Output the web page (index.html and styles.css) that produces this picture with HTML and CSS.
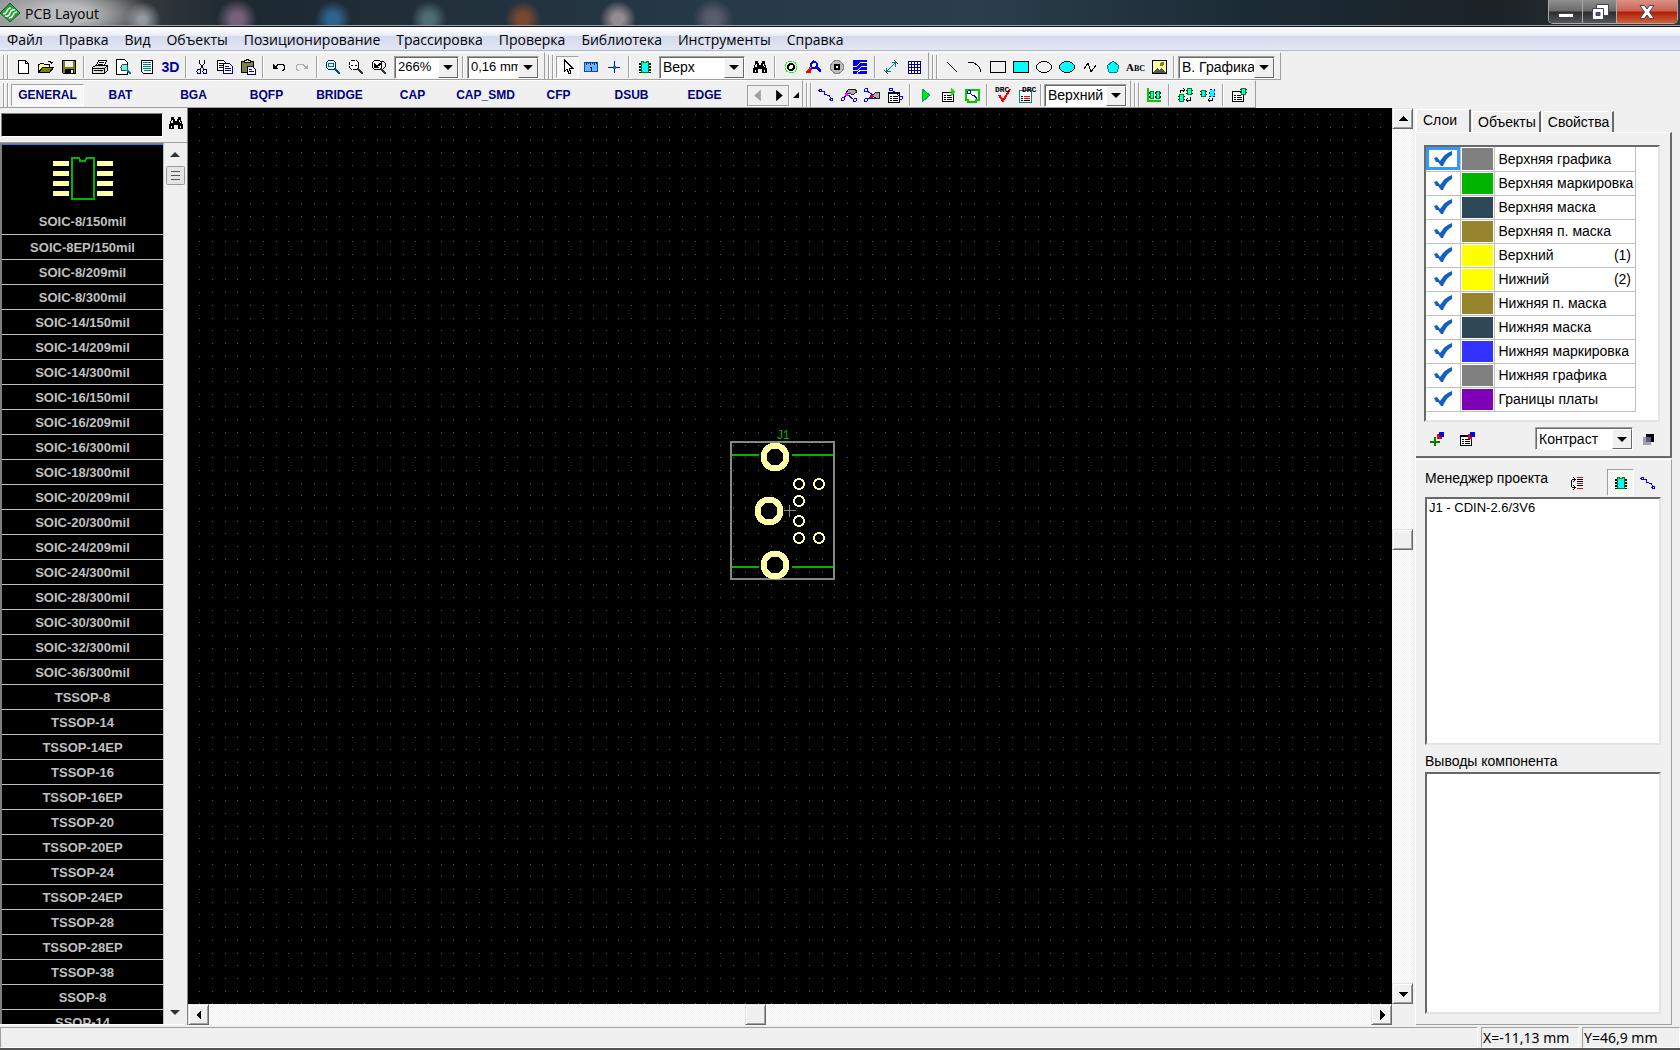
FILE: index.html
```
<!DOCTYPE html>
<html lang="ru">
<head>
<meta charset="utf-8">
<title>PCB Layout</title>
<link rel="stylesheet" href="styles.css">
</head>
<body>
<svg class="sprite" aria-hidden="true">
  <defs>
    <symbol id="i-new" viewBox="0 0 16 16"><path d="M3.500 1.500h7l3 3v10h-10z" fill="#fff" stroke="#000"/><path d="M10.500 1.500v3h3" fill="none" stroke="#000"/></symbol>
    <symbol id="i-open" viewBox="0 0 16 16"><path d="M.5 13.500v-8h1l1-1h3l1 1h5v3" fill="#ffff80" stroke="#000"/><path d="M.5 13.500l4-5h11l-4 5z" fill="#808000" stroke="#000"/><path d="M9.500 3.500q2-3 4 0v1m-2-1h3" fill="none" stroke="#000"/></symbol>
    <symbol id="i-save" viewBox="0 0 16 16"><path d="M1.500 1.500h13v13h-12l-1-1z" fill="#808000" stroke="#000"/><path d="M4 2h8v6H4z" fill="#f0f0f0"/><path d="M4 10h9v5H4z" fill="#000"/><path d="M10 11h2v3h-2z" fill="#f0f0f0"/></symbol>
    <symbol id="i-print" viewBox="0 0 16 16"><path d="M4.500 6.500l2-5h8l-2 5" fill="#fff" stroke="#000"/><path d="M7 3.500h5M6 5.500h5" stroke="#000"/><path d="M.5 8.500l3-2h12v5l-3 3h-12z" fill="#ddd" stroke="#000"/><path d="M.5 9.500h12v5m0-5l3-3M2 11.500h9" fill="none" stroke="#000"/><path d="M8 12h2v1H8z" fill="#cc0"/></symbol>
    <symbol id="i-preview" viewBox="0 0 16 16"><path d="M1.500.5h8l3 3v12h-11z" fill="#fff" stroke="#000"/><circle cx="9.500" cy="8.500" r="3.500" fill="#6cf2f2" stroke="#444"/><path d="M12 11l4 4" stroke="#008080" stroke-width="2"/></symbol>
    <symbol id="i-text" viewBox="0 0 16 16"><path d="M2.500 1.500h11v13h-9l-2-2z" fill="#fff" stroke="#000"/><path d="M4 3.500h8M4 5.500h8M4 7.500h8M4 9.500h8M5 11.500h7" stroke="#008080"/></symbol>
    <symbol id="i-cut" viewBox="0 0 16 16"><path d="M5.500 1v3l4 6M10.500 1v3l-4 6" fill="none" stroke="#000"/><circle cx="5" cy="12.500" r="2" fill="none" stroke="#000080"/><circle cx="11" cy="12.500" r="2" fill="none" stroke="#000080"/></symbol>
    <symbol id="i-copy" viewBox="0 0 16 16"><path d="M.5 1.500h6l3 3v7h-9z" fill="#fff" stroke="#000"/><path d="M2 4.500h4M2 6.500h5M2 8.500h5" stroke="#000"/><path d="M6.500 4.500h6l3 3v7h-9z" fill="#fff" stroke="#000080"/><path d="M8 7.500h4M8 9.500h6M8 11.500h6" stroke="#000080"/></symbol>
    <symbol id="i-paste" viewBox="0 0 16 16"><path d="M1.500 2.500h12v11h-12z" fill="#808040" stroke="#000"/><path d="M4.500 3.500v-2h2v-1h2v1h2v2z" fill="#ffff60" stroke="#000"/><path d="M7.500 7.500h5l3 3v5h-8z" fill="#fff" stroke="#000080"/><path d="M9 10.500h3M9 12.500h5" stroke="#000080"/></symbol>
    <symbol id="i-undo" viewBox="0 0 16 16"><path d="M2 5v5h5z"/><path d="M4.500 8l3-3h4l2 2v3l-2 2" fill="none" stroke="#000"/></symbol>
    <symbol id="i-redo" viewBox="0 0 16 16"><path d="M14 5v5H9z" fill="#b0b0b0"/><path d="M11.500 8l-3-3h-4l-2 2v3l2 2" fill="none" stroke="#b0b0b0"/></symbol>
    <symbol id="i-zoom" viewBox="0 0 16 16"><circle cx="6" cy="6" r="5" fill="#e8f4f8" stroke="#003050"/><path d="M3.500 4.500h5v3h-5z" fill="none" stroke="#0070a0"/><path d="M9.500 9.500l5.500 5.500" stroke="#005070" stroke-width="2"/></symbol>
    <symbol id="i-zoomall" viewBox="0 0 16 16"><circle cx="6" cy="6" r="5" fill="#fff" stroke="#000" stroke-dasharray="4 1"/><path d="M3 6.500h2m2 0h2" stroke="#000"/><path d="M9.500 9.500l5.500 5.500" stroke="#333" stroke-width="2"/></symbol>
    <symbol id="i-zoomprev" viewBox="0 0 16 16"><circle cx="6" cy="6" r="5" fill="#fff" stroke="#000"/><path d="M10 2q5 0 5 5l-3 3" fill="none" stroke="#000"/><path d="M3 4v5h5zM6 7l3-4 2 3z"/><path d="M9.500 9.500l5.500 5.500" stroke="#333" stroke-width="2"/></symbol>
    <symbol id="i-pointer" viewBox="0 0 16 16"><path d="M4.500 1v11l2.500-2 2 5 2-1-2-5h3.500z" fill="#fff" stroke="#000"/></symbol>
    <symbol id="i-ruler" viewBox="0 0 16 16"><path d="M1.500 3.500h13v9h-13z" fill="#6cb4ff" stroke="#0050b0"/><path d="M3.500 3v3M5.500 3v2M7.500 3v3M9.500 3v2M11.500 3v3M13.500 3v2" stroke="#003080"/><path d="M7 8h1.500v4" fill="none" stroke="#000"/></symbol>
    <symbol id="i-origin" viewBox="0 0 16 16"><path d="M2 8.500h12M8.500 2v12" stroke="#00f"/><path d="M7 7h3v3H7z" fill="#008080"/></symbol>
    <symbol id="i-chip" viewBox="0 0 16 16"><path d="M2 4h12v2H2zM2 7h12v2H2zM2 10h12v2H2zM2 13h12v1H2z"/><path d="M4.500 2.500h2v1h3v-1h2v11h-7z" fill="#0ff" stroke="#008000"/></symbol>
    <symbol id="i-find" viewBox="0 0 16 16"><path d="M3 2h3v2h1v2h2V4h1V2h3v3l2 5v4h-5v-4H6v4H1v-4l2-5z"/><path class="glint" d="M4 5h1v3H3zM11 5h1l1 3h-1zM3 11h1v2H3zM12 11h1v2h-1z"/></symbol>
    <symbol id="i-padgreen" viewBox="0 0 16 16"><circle cx="8" cy="8" r="6" fill="none" stroke="#0f0" stroke-dasharray="5 1"/><circle cx="8" cy="8" r="3" fill="#fff" stroke="#000" stroke-width="2"/></symbol>
    <symbol id="i-route" viewBox="0 0 16 16"><path d="M1 14l4-5M2 13l3-1" stroke="#f00" stroke-width="3"/><path d="M6 10l2-6 3 5 4 3" fill="none" stroke="#00f" stroke-width="3"/><circle cx="8" cy="6" r="3" fill="#fff" stroke="#00f" stroke-width="2"/></symbol>
    <symbol id="i-padgray" viewBox="0 0 16 16"><circle cx="8" cy="8" r="6.500" fill="#bbb" stroke="#888"/><circle cx="8" cy="8" r="2.500" fill="#fff" stroke="#000" stroke-width="2"/></symbol>
    <symbol id="i-pour" viewBox="0 0 16 16"><path d="M1 1h14v14H1z" fill="#00f"/><path d="M1 7h4l4-4h6M1 11h5l4-4h5M5 15v-1l4-3h6" fill="none" stroke="#fff"/></symbol>
    <symbol id="i-dim" viewBox="0 0 16 16"><path d="M3 13L13 3" stroke="#008080"/><path d="M8.500 3.500h4v4M3.500 8.500v4h4" fill="none" stroke="#008080"/><path d="M11 1l4 4M1 11l4 4" stroke="#444"/></symbol>
    <symbol id="i-grid" viewBox="0 0 16 16"><path d="M2.500 2.500h12v12h-12zM2 5.500h12M2 8.500h12M2 11.500h12M5.500 2v12M8.500 2v12M11.500 2v12" fill="#fff" stroke="#000080"/></symbol>
    <symbol id="i-line" viewBox="0 0 16 16"><path d="M3 3l10 10" stroke="#000"/></symbol>
    <symbol id="i-arc" viewBox="0 0 16 16"><path d="M1 3.500q10-1 13 9" fill="none" stroke="#000"/></symbol>
    <symbol id="i-rect" viewBox="0 0 16 16"><path d="M.5 2.500h15v11H.5z" fill="none" stroke="#000"/></symbol>
    <symbol id="i-frect" viewBox="0 0 16 16"><path d="M.5 2.500h15v11H.5z" fill="#0ff" stroke="#000"/></symbol>
    <symbol id="i-ell" viewBox="0 0 16 16"><ellipse cx="8" cy="8" rx="7.500" ry="5.500" fill="none" stroke="#000"/></symbol>
    <symbol id="i-fell" viewBox="0 0 16 16"><ellipse cx="8" cy="8" rx="7.500" ry="5.500" fill="#0ff" stroke="#000"/></symbol>
    <symbol id="i-poly" viewBox="0 0 16 16"><path d="M2 10l4-6 3 9 5-7" fill="none" stroke="#000"/></symbol>
    <symbol id="i-pent" viewBox="0 0 16 16"><path d="M8 2l6 5-2 6H4L2 7z" fill="#0ff" stroke="#008080"/></symbol>
    <symbol id="i-image" viewBox="0 0 16 16"><path d="M1.500 1.500h14v13h-14z" fill="#ffffa0" stroke="#000"/><path d="M2 14l4-5 2 2 2-2 5 5z" fill="#555"/><circle cx="11" cy="5" r="2" fill="#880"/></symbol>
    <symbol id="i-net" viewBox="0 0 16 16"><path d="M4 4.500h2l1 3 4 1 2 3" fill="none" stroke="#00f"/><circle cx="2.500" cy="3.500" r="1.500" fill="#fff" stroke="#00f"/><circle cx="13.500" cy="12.500" r="1.500" fill="#fff" stroke="#00f"/></symbol>
    <symbol id="i-netedit" viewBox="0 0 16 16"><path d="M5 6l3-4h6l2 3-5 3-2-2z" fill="#aaa" stroke="#222"/><path d="M2 12l4-5 7 6" fill="none" stroke="#00f"/><circle cx="2" cy="12" r="1.500" fill="#fff" stroke="#00f"/><circle cx="14" cy="13" r="1.500" fill="#fff" stroke="#00f"/><path d="M4 6h3v3H4z" fill="#f0f"/></symbol>
    <symbol id="i-netcut" viewBox="0 0 16 16"><path d="M8 9l4-4h3v6h-3z" fill="#aaa" stroke="#222"/><path d="M3 4l6 4-6 5M6 11l6 1" fill="none" stroke="#00f"/><path d="M6 8h3v3H6z" fill="#d00"/><circle cx="2" cy="3" r="1.500" fill="#fff" stroke="#00f"/><circle cx="2" cy="13" r="1.500" fill="#fff" stroke="#00f"/></symbol>
    <symbol id="i-netlist" viewBox="0 0 16 16"><path d="M1.500 5.500h11v10h-11z" fill="#fff" stroke="#000"/><path d="M1 6.500h12M3 9.500h2M6 9.500h5M3 11.500h2M6 11.500h5M3 13.500h2M6 13.500h5" stroke="#000"/><path d="M4 3l4 2 6 6" fill="none" stroke="#00f"/><circle cx="4" cy="2.500" r="1.500" fill="#fff" stroke="#00f"/><circle cx="14" cy="11" r="1.500" fill="#fff" stroke="#00f"/></symbol>
    <symbol id="i-run" viewBox="0 0 16 16"><path d="M4 2l8 6-8 7z" fill="#0e0" stroke="#0a6"/></symbol>
    <symbol id="i-runlist" viewBox="0 0 16 16"><path d="M1.500 5.500h11v9h-11z" fill="#fff" stroke="#000"/><path d="M3 8.500h2M6 8.500h5M3 10.500h2M6 10.500h5M3 12.500h2M6 12.500h5" stroke="#000"/><path d="M10 1l5 4-5 4z" fill="#0e0"/></symbol>
    <symbol id="i-board" viewBox="0 0 16 16"><path d="M2 3h13v10h-3v2H4v-2H2z" fill="#fff" stroke="#0c0" stroke-width="2"/><path d="M5 5l3 3h2l3 4" fill="none" stroke="#00f"/><circle cx="5" cy="5" r="1.500" fill="#fff" stroke="#00f"/></symbol>
    <symbol id="i-check" viewBox="0 0 16 16"><path d="M4 8l4 6 7-12" fill="none" stroke="#f00" stroke-width="2"/></symbol>
    <symbol id="i-drclist" viewBox="0 0 16 16"><path d="M1.500 3.500h12v12h-12z" fill="#fff" stroke="#088"/><path d="M3 9.500h2M3 11.500h2M3 13.500h2M6 13.500h6" stroke="#000"/><path d="M6 9.500h6M6 11.500h6" stroke="#f00"/></symbol>
    <symbol id="i-align" viewBox="0 0 16 16"><path d="M1.500 1v13h13" fill="none" stroke="#0c0" stroke-width="2"/><path d="M3 5h5v2H3zM3 9h5v2H3zM9 5h6v2H9zM9 9h6v2H9z" fill="#000"/><path d="M4.500 4.500h3v7h-3zM10.500 4.500h3v7h-3z" fill="#0ff" stroke="#080"/></symbol>
    <symbol id="i-place" viewBox="0 0 16 16"><path d="M1 9h7v1H1zM1 12h7v1H1zM9 3h7v1H9zM9 6h7v1H9z"/><path d="M2.500 7.500h4v7h-4zM10.500 1.500h4v6h-4z" fill="#0ff" stroke="#080"/><path d="M3 6V3h5M6 1l2 2-2 2M13 10v3H9M11 11l-2 2 2 2" fill="none" stroke="#000"/></symbol>
    <symbol id="i-place2" viewBox="0 0 16 16"><path d="M0 4h7v1H0zM0 7h7v1H0z"/><path d="M1.500 3.500h4v6h-4z" fill="#0ff" stroke="#080"/><path d="M9.500 2.500h5v7h-5z" fill="#0ff" stroke="#00f" stroke-dasharray="2 2"/><path d="M12 11v2H8M10 11l-2 2 2 2" fill="none" stroke="#000"/></symbol>
    <symbol id="i-complist" viewBox="0 0 16 16"><path d="M1.500 4.500h11v10h-11z" fill="#fff" stroke="#000"/><path d="M3 8.500h2M6 8.500h4M3 10.500h2M6 10.500h5M3 12.500h2M6 12.500h5" stroke="#000"/><path d="M9 2h7v1H9zM9 5h7v1H9z"/><path d="M10.500 1.500h4v6h-4z" fill="#0ff" stroke="#080"/></symbol>
    <symbol id="i-addlayer" viewBox="0 0 16 16"><path d="M6 6v9M1 10.500h10" stroke="#008000" stroke-width="2"/><path d="M8 3h5v5H8z" fill="#f00"/><path d="M10 1h5v5h-5z" fill="#00f"/></symbol>
    <symbol id="i-layerlist" viewBox="0 0 16 16"><path d="M1.500 4.500h11v10h-11z" fill="#fff" stroke="#000"/><path d="M1 4h9v2H1z"/><path d="M3 8.500h2M6 8.500h5M3 10.500h2M6 10.500h5M3 12.500h2M6 12.500h5" stroke="#000"/><path d="M9 3h4v5H9z" fill="#f00"/><path d="M11 1h5v5h-5z" fill="#00f"/></symbol>
    <symbol id="i-contrast" viewBox="0 0 16 16"><path d="M6 3h8v8H6z"/><path d="M3 6h8v8H3z" fill="#a0a0b0"/><path d="M6 6h5v5H6z" fill="#5c5c80"/></symbol>
    <symbol id="i-sort" viewBox="0 0 16 16"><path d="M5.500 4.500h-2l-1 1v6l1 1h2M4 2l2 2.500L4 7M4 10l2 2.500L4 15" fill="none" stroke="#000"/><path d="M8 2.500h6M8 13.500h6M8 8.500h6" stroke="#f00"/><path d="M8 4.500h6M8 6.500h6M8 10.500h6" stroke="#000"/></symbol>
    <symbol id="i-tick" viewBox="0 0 18 16"><path d="M0 7l3-1 3 4q5-8 12-10v4q-6 3-9 11H7L4 11H2z" fill="#1560c4"/></symbol>
  </defs>
</svg>

<header class="titlebar">
  <svg class="logo" viewBox="0 0 20 20" aria-hidden="true"><path d="M10 0l10 10-10 9L0 10z" fill="#2f9a40" stroke="#1c5c28"/><path d="M3 11q3 0 4-3t4-3M5 13q4 1 5-3t5-3M9 15q3 0 4-3t4-3" fill="none" stroke="#e6f4e6" stroke-width="1.500"/></svg>
  <h1>PCB Layout</h1>
  <div class="winbtns">
    <button class="win min" aria-label="Свернуть"><svg viewBox="0 0 18 16"><path d="M1.500 9.500h15v4h-15z" fill="#fff" stroke="#444"/></svg></button>
    <button class="win max" aria-label="Восстановить"><svg viewBox="0 0 18 16"><path d="M5.500.5h12v11h-12z" fill="#fff" stroke="#445"/><path d="M1.500 4.500h11v11h-11z" fill="#fff" stroke="#445"/><path d="M5 8.500h4v3H5z" fill="#556" stroke="#445"/></svg></button>
    <button class="win close" aria-label="Закрыть"><svg viewBox="0 0 18 16"><path d="M2 1.500h4.500L9 5l2.500-3.500H16L11.500 8l4.500 6.500h-4.500L9 11l-2.500 3.500H2L6.500 8z" fill="#fff" stroke="#445"/></svg></button>
  </div>
</header>

<nav class="menu" aria-label="Меню">
  <button>Файл</button><button>Правка</button><button>Вид</button><button>Объекты</button><button>Позиционирование</button><button>Трассировка</button><button>Проверка</button><button>Библиотека</button><button>Инструменты</button><button>Справка</button>
</nav>

<div class="bands">
  <div class="band">
    <i class="grip"></i>
    <button class="tb" aria-label="Новый"><svg><use href="#i-new"/></svg></button><button class="tb" aria-label="Открыть"><svg><use href="#i-open"/></svg></button><button class="tb" aria-label="Сохранить"><svg><use href="#i-save"/></svg></button>
    <i class="sep"></i>
    <button class="tb" aria-label="Печать"><svg><use href="#i-print"/></svg></button><button class="tb" aria-label="Просмотр"><svg><use href="#i-preview"/></svg></button><button class="tb wide" aria-label="Титулы"><svg><use href="#i-text"/></svg></button><button class="tb t3d">3D</button>
    <i class="sep"></i>
    <button class="tb" aria-label="Вырезать"><svg><use href="#i-cut"/></svg></button><button class="tb" aria-label="Копировать"><svg><use href="#i-copy"/></svg></button><button class="tb" aria-label="Вставить"><svg><use href="#i-paste"/></svg></button>
    <i class="sep"></i>
    <button class="tb" aria-label="Отменить"><svg><use href="#i-undo"/></svg></button><button class="tb" aria-label="Вернуть"><svg><use href="#i-redo"/></svg></button>
    <i class="sep"></i>
    <button class="tb" aria-label="Окно"><svg><use href="#i-zoom"/></svg></button><button class="tb" aria-label="Все"><svg><use href="#i-zoomall"/></svg></button><button class="tb" aria-label="Назад"><svg><use href="#i-zoomprev"/></svg></button>
    <span class="combo c-zoom"><select aria-label="Масштаб"><option>266%</option></select><span class="arrow"></span></span>
    <i class="sep"></i>
    <span class="combo c-step"><select aria-label="Шаг сетки"><option>0,16 mm</option></select><span class="arrow"></span></span>
  </div>
  <div class="band tight">
    <i class="grip"></i>
    <button class="tb down" aria-label="Выбор"><svg><use href="#i-pointer"/></svg></button><button class="tb" aria-label="Измерить"><svg><use href="#i-ruler"/></svg></button><button class="tb" aria-label="Начало координат"><svg><use href="#i-origin"/></svg></button>
    <i class="sep"></i>
    <button class="tb" aria-label="Компонент"><svg><use href="#i-chip"/></svg></button>
    <span class="combo c-side"><select aria-label="Сторона"><option>Верх</option></select><span class="arrow"></span></span>
    <button class="tb cyan" aria-label="Найти"><svg><use href="#i-find"/></svg></button>
    <i class="sep"></i>
    <button class="tb" aria-label="Площадка"><svg><use href="#i-padgreen"/></svg></button><button class="tb" aria-label="Трасса"><svg><use href="#i-route"/></svg></button><button class="tb" aria-label="Отверстие"><svg><use href="#i-padgray"/></svg></button><button class="tb" aria-label="Заливка"><svg><use href="#i-pour"/></svg></button>
    <i class="sep"></i>
    <button class="tb" aria-label="Размер"><svg><use href="#i-dim"/></svg></button><button class="tb" aria-label="Таблица"><svg><use href="#i-grid"/></svg></button>
  </div>
  <div class="band">
    <i class="grip"></i>
    <button class="tb" aria-label="Линия"><svg><use href="#i-line"/></svg></button><button class="tb" aria-label="Дуга"><svg><use href="#i-arc"/></svg></button><button class="tb" aria-label="Прямоугольник"><svg><use href="#i-rect"/></svg></button><button class="tb" aria-label="Прямоугольник с заливкой"><svg><use href="#i-frect"/></svg></button><button class="tb" aria-label="Эллипс"><svg><use href="#i-ell"/></svg></button><button class="tb" aria-label="Эллипс с заливкой"><svg><use href="#i-fell"/></svg></button><button class="tb" aria-label="Ломаная"><svg><use href="#i-poly"/></svg></button><button class="tb" aria-label="Полигон"><svg><use href="#i-pent"/></svg></button><button class="tb abc">Abc</button><button class="tb" aria-label="Изображение"><svg><use href="#i-image"/></svg></button>
    <i class="sep"></i>
    <span class="combo c-layer"><select aria-label="Слой графики"><option>В. Графика</option></select><span class="arrow"></span></span>
  </div>
</div>

<div class="bands">
  <div class="band tight">
    <i class="grip"></i>
    <button class="cat down">GENERAL</button><button class="cat">BAT</button><button class="cat">BGA</button><button class="cat">BQFP</button><button class="cat">BRIDGE</button><button class="cat">CAP</button><button class="cat">CAP_SMD</button><button class="cat">CFP</button><button class="cat">DSUB</button><button class="cat">EDGE</button>
    <div class="pager"><button aria-label="Предыдущие"><svg viewBox="0 0 20 20"><path d="M13 4v12l-7-6z" fill="#a0a0a0"/></svg></button><button aria-label="Следующие"><svg viewBox="0 0 20 20"><path d="M8 4v12l7-6z"/></svg></button></div>
    <svg class="corner" viewBox="0 0 6 6"><path d="M6 0v6H0z"/></svg>
  </div>
  <div class="band tight">
    <i class="grip"></i>
    <button class="tb" aria-label="Связь"><svg><use href="#i-net"/></svg></button><button class="tb" aria-label="Изменить связь"><svg><use href="#i-netedit"/></svg></button><button class="tb" aria-label="Разорвать связь"><svg><use href="#i-netcut"/></svg></button><button class="tb" aria-label="Структура сетей"><svg><use href="#i-netlist"/></svg></button>
    <i class="sep"></i>
    <button class="tb" aria-label="Трассировать"><svg><use href="#i-run"/></svg></button><button class="tb" aria-label="Настройка трассировки"><svg><use href="#i-runlist"/></svg></button><button class="tb" aria-label="Плата"><svg><use href="#i-board"/></svg></button>
    <i class="sep"></i>
    <button class="tb drc"><svg><use href="#i-check"/></svg><span>DRC</span></button><button class="tb drc right"><svg><use href="#i-drclist"/></svg><span>DRC</span></button>
    <i class="sep"></i>
    <span class="combo c-cur cyr"><select aria-label="Текущий слой"><option>Верхний</option></select><span class="arrow"></span></span>
  </div>
  <div class="band">
    <i class="grip"></i>
    <button class="tb" aria-label="Выровнять"><svg><use href="#i-align"/></svg></button>
    <i class="sep"></i>
    <button class="tb" aria-label="Расставить"><svg><use href="#i-place"/></svg></button><button class="tb" aria-label="Авторасстановка"><svg><use href="#i-place2"/></svg></button>
    <i class="sep"></i>
    <button class="tb" aria-label="Настройка"><svg><use href="#i-complist"/></svg></button>
  </div>
</div>

<main>
  <aside class="library">
    <div class="search"><input type="text" aria-label="Поиск"><button class="tb" aria-label="Найти компонент"><svg><use href="#i-find"/></svg></button></div>
    <div class="listwrap">
      <ul class="parts">
        <li class="first"><svg width="62" height="44" viewBox="0 0 62 44"><path d="M0 4h17v5H0zM0 14h17v5H0zM0 25h17v5H0zM0 35h17v5H0zM45 4h17v5H45zM45 14h17v5H45zM45 25h17v5H45zM45 35h17v5H45z" fill="#ffffa8"/><path d="M20 1h7l1 3h5l2-3h7v42H20z" fill="none" stroke="#00b400" stroke-width="2"/></svg>SOIC-8/150mil</li>
        <li>SOIC-8EP/150mil</li><li>SOIC-8/209mil</li><li>SOIC-8/300mil</li><li>SOIC-14/150mil</li><li>SOIC-14/209mil</li><li>SOIC-14/300mil</li><li>SOIC-16/150mil</li><li>SOIC-16/209mil</li><li>SOIC-16/300mil</li><li>SOIC-18/300mil</li><li>SOIC-20/209mil</li><li>SOIC-20/300mil</li><li>SOIC-24/209mil</li><li>SOIC-24/300mil</li><li>SOIC-28/300mil</li><li>SOIC-30/300mil</li><li>SOIC-32/300mil</li><li>SOIC-36/300mil</li><li>TSSOP-8</li><li>TSSOP-14</li><li>TSSOP-14EP</li><li>TSSOP-16</li><li>TSSOP-16EP</li><li>TSSOP-20</li><li>TSSOP-20EP</li><li>TSSOP-24</li><li>TSSOP-24EP</li><li>TSSOP-28</li><li>TSSOP-28EP</li><li>TSSOP-38</li><li>SSOP-8</li><li>SSOP-14</li>
      </ul>
      <div class="softbar">
        <svg viewBox="0 0 10 5"><path d="M5 0l5 5H0z" fill="#333"/></svg>
        <svg class="softthumb" viewBox="0 0 19 19"><rect x=".5" y=".5" width="18" height="18" rx="1" fill="#e4e4e6" stroke="#999"/><path d="M5 5.500h9M5 9.500h9M5 13.500h9" stroke="#555"/></svg>
        <svg class="last" viewBox="0 0 10 5"><path d="M0 0h10L5 5z" fill="#333"/></svg>
      </div>
    </div>
  </aside>

  <section class="work">
    <svg class="canvas" shape-rendering="crispEdges">
      <defs>
        <pattern id="dots" x="11" y="6" width="127" height="127" patternUnits="userSpaceOnUse">
          <path id="dotrow" d="M0 .5h1M13 .5h1M26 .5h1M38 .5h1M51 .5h1M64 .5h1M77 .5h1M89 .5h1M102 .5h1M115 .5h1" stroke="#585858"/>
          <use href="#dotrow" y="13"/><use href="#dotrow" y="26"/><use href="#dotrow" y="38"/><use href="#dotrow" y="51"/><use href="#dotrow" y="64"/><use href="#dotrow" y="77"/><use href="#dotrow" y="89"/><use href="#dotrow" y="102"/><use href="#dotrow" y="115"/>
        </pattern>
      </defs>
      <rect width="100%" height="100%" fill="#000"/>
      <rect width="100%" height="100%" fill="url(#dots)"/>
      <rect x="543" y="334" width="103" height="137" fill="none" stroke="#888" stroke-width="2"/>
      <path d="M544 347h27M604 347h41M544 459h27M604 459h41" stroke="#00b400" stroke-width="2"/>
      <g fill="#000" stroke="#ffffa8">
        <g stroke-width="6"><circle cx="587" cy="349" r="11.500"/><circle cx="581" cy="403" r="11.500"/><circle cx="587" cy="457" r="11.500"/></g>
        <g stroke-width="2"><circle cx="611" cy="376" r="5"/><circle cx="631" cy="376" r="5"/><circle cx="611" cy="393" r="5"/><circle cx="611" cy="413" r="5"/><circle cx="611" cy="430" r="5"/><circle cx="631" cy="430" r="5"/></g>
      </g>
      <path d="M596 402.500h12M601.500 397v12" stroke="#888"/>
      <text x="589" y="331" class="ref">J1</text>
    </svg>
    <div class="vbar"><span class="sb"><svg viewBox="0 0 10 10"><path d="M5 2l5 5H0z"/></svg></span><i class="fill"></i><span class="sb"></span><i class="fill"></i><span class="sb"><svg viewBox="0 0 10 10"><path d="M0 3h10L5 8z"/></svg></span></div>
    <div class="hbar"><span class="sb"><svg viewBox="0 0 10 10"><path d="M7 0v10L2 5z"/></svg></span><i class="fill"></i><span class="sb"></span><i class="fill"></i><span class="sb"><svg viewBox="0 0 10 10"><path d="M3 0v10l5-5z"/></svg></span></div>
  </section>

  <aside class="side">
    <div class="tabs" role="tablist"><button class="tab on" role="tab">Слои</button><button class="tab" role="tab">Объекты</button><button class="tab" role="tab">Свойства</button></div>
    <div class="panel">
      <div class="sunken layers">
        <table>
          <tbody>
            <tr class="sel"><td><label class="tick"><input type="checkbox" checked aria-label="Верхняя графика"><svg><use href="#i-tick"/></svg></label></td><td class="sw gray"></td><td>Верхняя графика</td></tr>
            <tr><td><label class="tick"><input type="checkbox" checked aria-label="Верхняя маркировка"><svg><use href="#i-tick"/></svg></label></td><td class="sw green"></td><td>Верхняя маркировка</td></tr>
            <tr><td><label class="tick"><input type="checkbox" checked aria-label="Верхняя маска"><svg><use href="#i-tick"/></svg></label></td><td class="sw slate"></td><td>Верхняя маска</td></tr>
            <tr><td><label class="tick"><input type="checkbox" checked aria-label="Верхняя п. маска"><svg><use href="#i-tick"/></svg></label></td><td class="sw olive"></td><td>Верхняя п. маска</td></tr>
            <tr><td><label class="tick"><input type="checkbox" checked aria-label="Верхний"><svg><use href="#i-tick"/></svg></label></td><td class="sw yellow"></td><td>Верхний<span class="num">(1)</span></td></tr>
            <tr><td><label class="tick"><input type="checkbox" checked aria-label="Нижний"><svg><use href="#i-tick"/></svg></label></td><td class="sw yellow"></td><td>Нижний<span class="num">(2)</span></td></tr>
            <tr><td><label class="tick"><input type="checkbox" checked aria-label="Нижняя п. маска"><svg><use href="#i-tick"/></svg></label></td><td class="sw olive"></td><td>Нижняя п. маска</td></tr>
            <tr><td><label class="tick"><input type="checkbox" checked aria-label="Нижняя маска"><svg><use href="#i-tick"/></svg></label></td><td class="sw slate"></td><td>Нижняя маска</td></tr>
            <tr><td><label class="tick"><input type="checkbox" checked aria-label="Нижняя маркировка"><svg><use href="#i-tick"/></svg></label></td><td class="sw blue"></td><td>Нижняя маркировка</td></tr>
            <tr><td><label class="tick"><input type="checkbox" checked aria-label="Нижняя графика"><svg><use href="#i-tick"/></svg></label></td><td class="sw gray"></td><td>Нижняя графика</td></tr>
            <tr><td><label class="tick"><input type="checkbox" checked aria-label="Границы платы"><svg><use href="#i-tick"/></svg></label></td><td class="sw purple"></td><td>Границы платы</td></tr>
          </tbody>
        </table>
      </div>
      <div class="tools">
        <button class="tb" aria-label="Добавить слой"><svg><use href="#i-addlayer"/></svg></button>
        <button class="tb" aria-label="Настройка слоев"><svg><use href="#i-layerlist"/></svg></button>
        <span class="combo c-contrast cyr"><select aria-label="Режим"><option>Контраст</option></select><span class="arrow"></span></span>
        <button class="tb" aria-label="Показ слоев"><svg><use href="#i-contrast"/></svg></button>
      </div>
    </div>
    <div class="project">
      <div class="phead"><h2>Менеджер проекта</h2><button class="tb" aria-label="Сортировка"><svg><use href="#i-sort"/></svg></button><button class="tb big down" aria-label="Компоненты"><svg><use href="#i-chip"/></svg></button><button class="tb" aria-label="Сети"><svg><use href="#i-net"/></svg></button></div>
      <ul class="sunken box"><li>J1 - CDIN-2.6/3V6</li></ul>
      <h2 class="pins">Выводы компонента</h2>
      <ul class="sunken box"></ul>
    </div>
  </aside>
</main>

<footer class="status"><div class="cell grow"></div><div class="cell">X=-11,13 mm</div><div class="cell">Y=46,9 mm</div></footer>
</body>
</html>
```
FILE: styles.css
```
* { box-sizing: border-box; }

body {
  margin: 0;
  height: 100vh;
  display: flex;
  flex-direction: column;
  overflow: hidden;
  background: #f0f0f0;
  color: #000;
  font: 13px/16px "Liberation Sans", Arial, sans-serif;
}

button, select, input { font: inherit; color: inherit; border-radius: 0; margin: 0; }
button { background: none; border: 0; padding: 0; }
ul { list-style: none; margin: 0; padding: 0; }
svg { display: block; }
.sprite { display: none; }

/* Window frame */
.titlebar {
  flex: none;
  height: 27px;
  display: flex;
  align-items: center;
  border-bottom: 1px solid #111;
  box-shadow: inset 0 -1px #9aa3ad;
  background:
    radial-gradient(ellipse 90px 30px at 62px 14px, #b8babb 30%, transparent),
    radial-gradient(circle 18px at 143px 20px, #8e949c 20%, transparent),
    radial-gradient(circle 20px at 237px 19px, #75617a 30%, transparent),
    radial-gradient(circle 18px at 333px 19px, #2f638f 30%, transparent),
    radial-gradient(circle 18px at 429px 19px, #4d6c74 30%, transparent),
    radial-gradient(circle 18px at 523px 19px, #794830 30%, transparent),
    radial-gradient(circle 18px at 618px 19px, #958c90 30%, transparent),
    radial-gradient(circle 20px at 713px 19px, #5a5c6c 30%, transparent),
    linear-gradient(90deg, #8a8d8f, #35393c 140px, #1c2830 240px, #263947 700px, #2b3e4b 980px, #1b2b36 1250px, #1c2226 1500px, #33383b);
}
.logo { width: 20px; height: 20px; }
.titlebar h1 { flex: 1; margin: 2px 0 0 5px; font: 14px/20px "Open Sans", "Noto Sans", sans-serif; }
.winbtns {
  align-self: flex-start;
  display: flex;
  height: 24px;
  margin-right: 2px;
  border: 1px solid #aaa;
  border-top: 0;
  border-radius: 0 0 5px 5px;
  overflow: hidden;
}
.win { width: 34px; display: grid; place-items: center; border-right: 1px solid #aaa; background: linear-gradient(#8f8f8f, #6a6a6a 48%, #2c2c2e 52%, #55575a); }
.win svg { width: 18px; height: 16px; }
.win.close { width: 60px; border-right: 0; background: linear-gradient(#dc9184, #c96352 48%, #ac1e06 52%, #d2603c); }

.menu {
  flex: none;
  height: 24px;
  display: flex;
  align-items: center;
  gap: 16px;
  padding: 2px 7px 0;
  border-bottom: 1px solid #b4b9cc;
  background: linear-gradient(#fff, #e9edf6 38%, #d3daed 40%, #e3e7f6);
  font: 14px/20px "Open Sans", "Noto Sans", sans-serif;
}

/* Toolbars */
.bands { flex: none; display: flex; height: 28px; }
.menu + .bands { margin-top: 1px; }
.band {
  display: flex;
  align-items: center;
  padding: 2px 5px 0 0;
  border-top: 1px solid #fff;
  border-right: 1px solid #a0a0a0;
  border-bottom: 1px solid #a0a0a0;
}
.band.tight { padding-right: 3px; }
.grip { width: 5px; height: 24px; margin: 0 3px; border: solid #a0a0a0; border-width: 0 1px; box-shadow: inset 1px 0 #fff, 1px 0 #fff; }
.sep { width: 8px; height: 22px; background: linear-gradient(90deg, transparent 3px, #a0a0a0 3px 4px, #fff 4px 5px, transparent 5px); }
.tb { width: 23px; height: 22px; flex: none; display: grid; place-items: center; }
.tb svg, .tick svg { width: 16px; height: 16px; shape-rendering: crispEdges; }
.tb.wide { width: 25px; }
.t3d { font-weight: bold; font-size: 14px; color: #0000a0; }
.abc { font: bold small-caps 11px/16px "Liberation Serif", serif; }
.glint { fill: #eee; }
.cyan .glint { fill: #0ff; }
.down {
  border: 1px solid #fff;
  border-color: #a0a0a0 #fff #fff #a0a0a0;
  background: repeating-conic-gradient(#fff 0 25%, #f0f0f0 0 50%) 0 0 / 2px 2px;
}
.drc { position: relative; font: bold 8px/8px "Liberation Mono", monospace; }
.drc span { position: absolute; left: 4px; top: 2px; }
.drc.right span { left: 8px; }
.cat { width: 73px; height: 22px; font-weight: bold; font-size: 12px; color: #000080; }
.pager { display: flex; height: 21px; margin-left: 6px; border: 1px solid #a0a0a0; box-shadow: 1px 1px #fff; }
.pager svg { width: 20px; height: 19px; }
.corner { width: 6px; height: 6px; margin: 0 0 0 4px; }

.combo {
  display: grid;
  height: 23px;
  border: 1px solid #fff;
  border-color: #a0a0a0 #fff #fff #a0a0a0;
  box-shadow: inset 1px 1px #696969;
  background: #fff;
}
.combo select {
  grid-area: 1 / 1;
  min-width: 0;
  width: 100%;
  appearance: none;
  border: 0;
  outline: 0;
  padding: 0 19px 0 3px;
  background: none;
  overflow: hidden;
  text-overflow: clip;
}
.combo .arrow {
  grid-area: 1 / 1;
  justify-self: end;
  width: 20px;
  height: 20px;
  margin-top: 1px;
  border: 1px solid #fff;
  border-color: #fff #696969 #696969 #fff;
  background: #f0f0f0;
  pointer-events: none;
  display: grid;
  place-items: center;
}
.combo .arrow::before { content: ""; border: 5px solid transparent; border-top-color: #000; border-bottom: 0; }
.c-zoom { width: 65px; margin-left: 4px; }
.c-step { width: 72px; }
.c-side { width: 86px; margin: 0 3px; }
.c-layer { width: 97px; }
.c-cur { width: 83px; margin-left: -1px; }
.c-side, .c-layer, .cyr { font-size: 14px; }

main { flex: 1; min-height: 0; display: flex; }

/* Component library */
.library { width: 188px; flex: none; display: flex; flex-direction: column; border-right: 1px solid #808080; }
.search { display: flex; align-items: center; height: 35px; padding-bottom: 4px; border-bottom: 1px solid #a0a0a0; }
.search input { width: 162px; height: 24px; margin: 3px 0 0 1px; border: 1px solid; border-color: #808080 #fff #fff #808080; background: #000; color: #fff; }
.search .tb { margin-left: 1px; }
.listwrap { flex: 1; min-height: 0; display: flex; margin-right: 2px; border-bottom: 1px solid #fff; }
.parts { flex: 1; overflow: hidden; margin-right: 1px; border: 1px solid #808080; border-left-width: 2px; border-right: 1px solid #c0c0c0; border-bottom: 0; background: #000; }
.parts li {
  height: 25px;
  border-bottom: 1px solid #c0c0c0;
  color: #c0c0c0;
  font-weight: bold;
  line-height: 25px;
  text-align: center;
}
.parts li.first { height: 91px; display: flex; flex-direction: column; align-items: center; padding-top: 12px; gap: 9px; border-top: 1px solid #2f80e0; }
.parts svg { shape-rendering: crispEdges; }
.softbar { width: 20px; display: flex; flex-direction: column; align-items: center; padding-top: 9px; }
.softbar svg { width: 10px; height: 5px; }
.softbar .softthumb { width: 19px; height: 19px; margin-top: 9px; }
.softbar .last { margin: auto 0 9px; }

/* Drawing area */
.work { flex: 1; min-width: 0; display: grid; grid-template: 1fr 21px / 1fr 21px; }
.canvas { width: 100%; height: 100%; background: #000; }
.ref { font: 12px "Liberation Sans", Arial, sans-serif; fill: #00b400; }
.vbar { display: flex; flex-direction: column; }
.hbar { display: flex; }
.fill { flex: 1; background: repeating-conic-gradient(#fff 0 25%, #f0f0f0 0 50%) 0 0 / 2px 2px; }
.hbar .fill:first-of-type { flex: 536; }
.hbar .fill:last-of-type { flex: 605; }
.vbar .fill:first-of-type { flex: 400; }
.vbar .fill:last-of-type { flex: 433; }
.sb {
  width: 21px;
  height: 21px;
  flex: none;
  display: grid;
  place-items: center;
  background: #f0f0f0;
  border: 1px solid #e3e3e3;
  border-color: #e3e3e3 #696969 #696969 #e3e3e3;
  box-shadow: inset 1px 1px #fff, inset -1px -1px #a0a0a0;
}
.sb svg { width: 10px; height: 10px; shape-rendering: crispEdges; }

/* Side panels */
.side { width: 257px; flex: none; display: flex; flex-direction: column; margin: 0 8px 0 2px; font-size: 14px; border-left: 1px solid #fff; }
.tabs { display: flex; align-items: flex-end; height: 24px; }
.tab { height: 21px; padding: 0 3px 0 5px; margin-right: 1px; border: 1px solid #fff; border-right: 2px solid #696969; border-bottom: 0; }
.tab.on { height: 23px; padding: 0 12px 3px 6px; }
.panel { height: 326px; flex: none; padding: 12px 10px 0 8px; border: 1px solid #fff; border-right: 2px solid #696969; border-bottom: 2px solid #696969; border-left: 0; }
.sunken { border: 2px solid; border-color: #696969 #e3e3e3 #e3e3e3 #696969; background: #fff; }
.layers { height: 277px; }
table { border-collapse: collapse; table-layout: fixed; width: 210px; }
td { height: 24px; padding: 0 0 0 4px; border: 1px solid #c0c0c0; border-top: 0; white-space: nowrap; }
td:first-child { width: 34px; padding: 0; border-left: 0; }
td.sw { width: 34px; box-shadow: inset 0 0 0 1px #fff; }
.tick { display: grid; place-items: center; height: 23px; }
.tick input { grid-area: 1 / 1; appearance: none; width: 100%; height: 100%; }
.tick svg { grid-area: 1 / 1; width: 18px; shape-rendering: auto; }
.sel .tick { box-shadow: inset 0 0 0 3px #3399ff; }
.num { float: right; margin-right: 4px; }
.gray { background: #808080; }
.green { background: #00b400; }
.slate { background: #2f4858; }
.olive { background: #99842e; }
.yellow { background: #ffff00; }
.blue { background: #3333ff; }
.purple { background: #8000b8; }
.tools { display: flex; align-items: center; gap: 7px; padding: 5px 1px 0; }
.c-contrast { width: 98px; margin-left: auto; }
.tools .tb:last-child { margin-left: -4px; }
.project { flex: 1; min-height: 0; display: flex; flex-direction: column; margin-top: 1px; padding: 0 10px 10px 9px; border: 1px solid #fff; border-right-color: #a0a0a0; border-bottom-color: #a0a0a0; border-left: 0; }
.phead { display: flex; align-items: center; height: 37px; padding: 8px 2px 0 0; }
.project h2 { margin: 0; font: inherit; }
.phead h2 { flex: 1; margin-top: -10px; }
.phead .big { width: 27px; height: 27px; margin: 0 2px 0 19px; }
.box { flex: 248; min-height: 0; padding: 1px 2px; font-size: 13px; }
.pins { flex: none; height: 27px; padding-top: 8px; }
.pins + .box { flex: 242; }

.status { flex: none; height: 25px; display: flex; gap: 3px; padding: 2px 0 0; border-bottom: 2px solid #555; font: 14px/20px "Noto Sans", "Open Sans", sans-serif; }
.cell { width: 98px; border: 1px solid; border-color: #a0a0a0 #fff #fff #a0a0a0; padding-left: 1px; white-space: nowrap; height: 21px; }
.grow { flex: 1; }
```
